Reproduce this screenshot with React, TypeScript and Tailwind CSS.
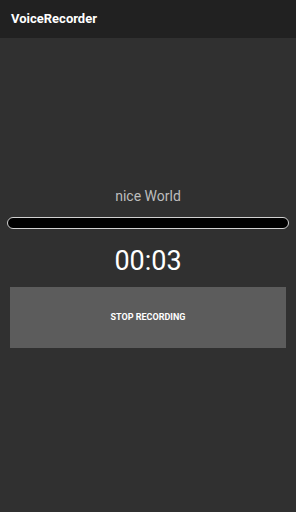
import React from "react";

export default function App() {
  return (
    <div
      className="w-[296px] h-[512px] bg-[#303030] flex flex-col"
      style={{ fontFamily: "Roboto, 'Liberation Sans', sans-serif" }}
    >
      {/* Toolbar */}
      <div className="h-[38px] bg-[#212121] flex items-center px-[11px] shrink-0">
        <span className="text-white text-[13px] font-bold">VoiceRecorder</span>
      </div>

      <div className="flex flex-col items-center pt-[148px]">
        <p className="text-[#bdbdbd] text-[14px] leading-[20px]">nice World</p>

        {/* Progress */}
        <div className="mt-[11px] w-[282px] h-[12px] rounded-full bg-black border-[1.5px] border-[#d0d0d0]" />

        <p className="mt-[15px] text-white text-[27px] leading-[34px]">00:03</p>

        <button className="mt-[9px] w-[276px] h-[61px] bg-[#5c5c5c] text-white text-[9px] font-bold">
          STOP RECORDING
        </button>
      </div>
    </div>
  );
}
